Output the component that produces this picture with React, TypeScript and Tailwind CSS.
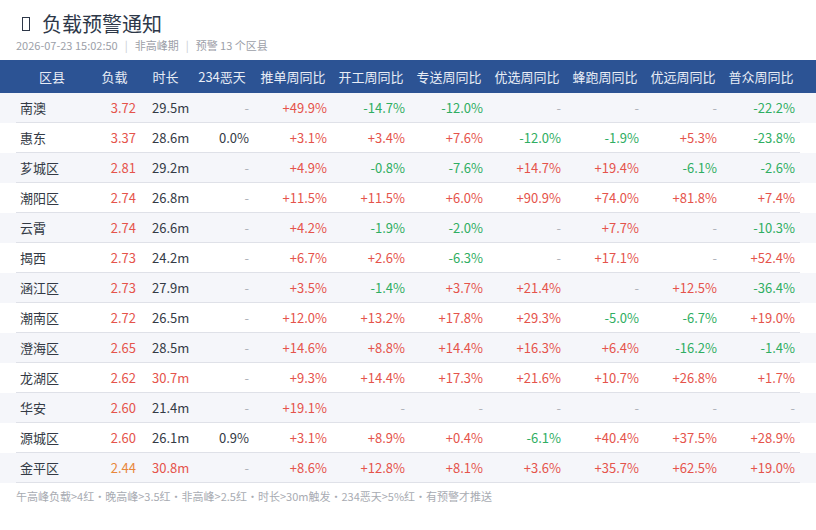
import React from "react";

type Row = [string, string, string, string, ...string[]];

const rows: Row[] = [
  ["南澳", "3.72", "29.5m", "-", "+49.9%", "-14.7%", "-12.0%", "-", "-", "-", "-22.2%"],
  ["惠东", "3.37", "28.6m", "0.0%", "+3.1%", "+3.4%", "+7.6%", "-12.0%", "-1.9%", "+5.3%", "-23.8%"],
  ["芗城区", "2.81", "29.2m", "-", "+4.9%", "-0.8%", "-7.6%", "+14.7%", "+19.4%", "-6.1%", "-2.6%"],
  ["潮阳区", "2.74", "26.8m", "-", "+11.5%", "+11.5%", "+6.0%", "+90.9%", "+74.0%", "+81.8%", "+7.4%"],
  ["云霄", "2.74", "26.6m", "-", "+4.2%", "-1.9%", "-2.0%", "-", "+7.7%", "-", "-10.3%"],
  ["揭西", "2.73", "24.2m", "-", "+6.7%", "+2.6%", "-6.3%", "-", "+17.1%", "-", "+52.4%"],
  ["涵江区", "2.73", "27.9m", "-", "+3.5%", "-1.4%", "+3.7%", "+21.4%", "-", "+12.5%", "-36.4%"],
  ["潮南区", "2.72", "26.5m", "-", "+12.0%", "+13.2%", "+17.8%", "+29.3%", "-5.0%", "-6.7%", "+19.0%"],
  ["澄海区", "2.65", "28.5m", "-", "+14.6%", "+8.8%", "+14.4%", "+16.3%", "+6.4%", "-16.2%", "-1.4%"],
  ["龙湖区", "2.62", "30.7m", "-", "+9.3%", "+14.4%", "+17.3%", "+21.6%", "+10.7%", "+26.8%", "+1.7%"],
  ["华安", "2.60", "21.4m", "-", "+19.1%", "-", "-", "-", "-", "-", "-"],
  ["源城区", "2.60", "26.1m", "0.9%", "+3.1%", "+8.9%", "+0.4%", "-6.1%", "+40.4%", "+37.5%", "+28.9%"],
  ["金平区", "2.44", "30.8m", "-", "+8.6%", "+12.8%", "+8.1%", "+3.6%", "+35.7%", "+62.5%", "+19.0%"],
];

const weekCols = ["推单周同比", "开工周同比", "专送周同比", "优选周同比", "蜂跑周同比", "优远周同比", "普众周同比"];

// colour for a signed percentage cell
const pctColor = (v: string) => {
  if (v === "-") return "text-[#b0b3ba]";
  if (v.startsWith("+")) return "text-[#e5534b]";
  if (v.startsWith("-")) return "text-[#2fae62]";
  return "text-[#333a45]";
};

const loadColor = (v: string) => (parseFloat(v) >= 2.5 ? "text-[#e5534b]" : "text-[#e8873a]");
const timeColor = (v: string) => (parseFloat(v) >= 30 ? "text-[#e5534b]" : "text-[#333a45]");

const App: React.FC = () => {
  return (
    <div
      className="w-[816px] h-[530px] bg-white overflow-hidden pt-[11px]"
      style={{ fontFamily: '"Noto Sans CJK SC", "Noto Sans", sans-serif' }}
    >
      {/* Title */}
      <div className="px-4">
        <h1 className="flex items-center h-[26px] text-[20px] leading-[26px] font-normal text-[#2d3748]">
          <span className="ml-[6px] mr-[12px] inline-block w-[8px] h-[14px] border border-[#2d3748]"></span>
          负载预警通知
        </h1>
        <p className="h-[16px] leading-[16px] text-[11px] text-[#9ca0a8]">
          2026-07-23 15:02:50
          <span className="mx-[7px] text-[#c8cbd1]">|</span>
          非高峰期
          <span className="mx-[7px] text-[#c8cbd1]">|</span>
          预警 13 个区县
        </p>
      </div>

      {/* Header bar */}
      <div className="mt-[7px] h-[33px] bg-[#2c5394] px-4">
        <div className="flex h-full items-center text-[13px] text-[#e8edf6]">
          <div className="w-[72px] text-center">区县</div>
          <div className="w-[53px] text-center">负载</div>
          <div className="w-[49px] text-center">时长</div>
          <div className="w-[64px] text-center">234恶天</div>
          {weekCols.map((c) => (
            <div key={c} className="w-[78px] text-center">
              {c}
            </div>
          ))}
        </div>
      </div>

      {/* Rows */}
      <div>
        {rows.map((r, i) => (
          <div key={r[0]} className={`px-4 ${i % 2 === 0 ? "bg-[#f5f6fa]" : "bg-white"}`}>
            <div className="flex h-[30px] items-center border-b border-[#dfe1e8] text-[13px]">
              <div className="w-[72px] pl-1 text-[#333a45]">{r[0]}</div>
              <div className={`w-[53px] pr-[5px] text-right ${loadColor(r[1])}`}>{r[1]}</div>
              <div className={`w-[49px] pl-[11px] ${timeColor(r[2])}`}>{r[2]}</div>
              <div className={`w-[64px] pr-[5px] text-right ${pctColor(r[3])}`}>{r[3]}</div>
              {r.slice(4).map((v, j) => (
                <div key={j} className={`w-[78px] pr-[5px] text-right ${pctColor(v)}`}>
                  {v}
                </div>
              ))}
            </div>
          </div>
        ))}
      </div>

      {/* Footer rules */}
      <p className="mt-[5px] px-4 h-[16px] leading-[16px] text-[11px] text-[#a8abb2]">
        午高峰负载&gt;4红·晚高峰&gt;3.5红·非高峰&gt;2.5红·时长&gt;30m触发·234恶天&gt;5%红·有预警才推送
      </p>
    </div>
  );
};

export default App;
